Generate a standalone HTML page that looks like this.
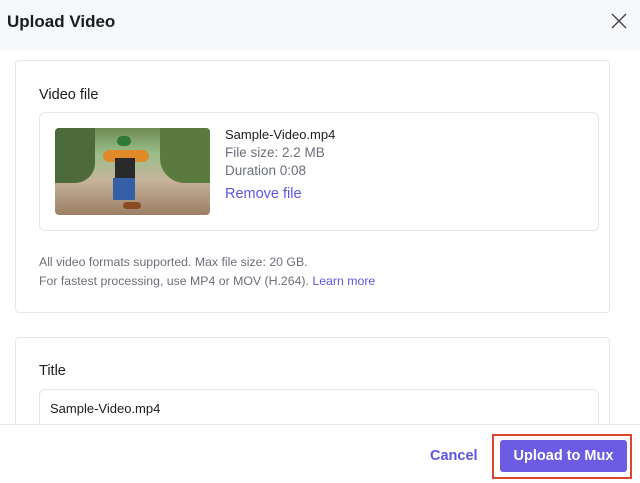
<!DOCTYPE html>
<html style="width:640px;height:483px;overflow:hidden"><head><style>
*{margin:0;padding:0;box-sizing:border-box}
body{width:640px;height:483px;overflow:hidden;background:#fff;font-family:"Liberation Sans",sans-serif;position:relative;color:#1f2023}
.hdr{position:absolute;left:0;top:0;width:640px;height:51px;background:#f7f8fb}
.hdr h1{position:absolute;left:7px;top:12px;font-size:17px;font-weight:bold;color:#1b1c1f}
.card{position:absolute;left:15px;width:595px;border:1px solid #e3e6ee;border-radius:4px;background:#fff}
.lbl{position:absolute;font-size:14.5px;color:#1b1c1f}
.box{position:absolute;left:23px;width:560px;border:1px solid #e3e6ee;border-radius:6px;background:#fff}
.t{position:absolute;font-size:13px;white-space:nowrap}
.g{color:#6b6f79}
.p{color:#5b55e6}
</style></head><body>
<div class="hdr"><h1>Upload Video</h1>
<svg style="position:absolute;left:611px;top:13px" width="16" height="16" viewBox="0 0 16 16"><path d="M1 1L15 15M15 1L1 15" stroke="#444" stroke-width="1.4"/></svg></div>
<div class="card" style="top:60px;height:253px">
<div class="lbl" style="left:23px;top:26px">Video file</div>
<div class="box" style="top:51px;height:119px">
<div style="position:absolute;left:15px;top:15px;width:155px;height:87px;border-radius:4px;background:linear-gradient(180deg,#6f8a55 0%,#9bbf8a 30%,#c6b39a 60%,#9c7f66 100%);overflow:hidden">
<div style="position:absolute;left:0;top:0;width:40px;height:55px;background:#4c6a3a;border-radius:0 0 20px 0"></div>
<div style="position:absolute;right:0;top:0;width:50px;height:55px;background:#5a7a3e;border-radius:0 0 0 25px"></div>
<div style="position:absolute;left:62px;top:8px;width:14px;height:10px;background:#2f7a36;border-radius:6px"></div>
<div style="position:absolute;left:48px;top:22px;width:46px;height:12px;background:#e08a2a;border-radius:6px"></div>
<div style="position:absolute;left:60px;top:30px;width:20px;height:22px;background:#2a2a2a"></div>
<div style="position:absolute;left:58px;top:50px;width:22px;height:22px;background:#3560a8"></div>
<div style="position:absolute;left:68px;top:74px;width:18px;height:7px;background:#8a4a22;border-radius:4px"></div>
</div>
<div class="t" style="left:185px;top:14px;color:#1b1c1f">Sample-Video.mp4</div>
<div class="t g" style="left:185px;top:32px;font-size:13.5px">File size: 2.2 MB</div>
<div class="t g" style="left:185px;top:50px;font-size:13.5px">Duration 0:08</div>
<div class="t p" style="left:185px;top:73px;font-size:14.5px">Remove file</div>
</div>
<div class="t g" style="left:23px;top:194px;font-size:12.3px">All video formats supported. Max file size: 20 GB.</div>
<div class="t g" style="left:23px;top:213px;font-size:12.3px">For fastest processing, use MP4 or MOV (H.264). <span class="p">Learn more</span></div>
</div>
<div class="card" style="top:337px;height:140px">
<div class="lbl" style="left:23px;top:25px">Title</div>
<div class="box" style="top:51px;height:60px"><div class="t" style="left:10px;top:11px;color:#1b1c1f">Sample-Video.mp4</div></div>
</div>
<div style="position:absolute;left:0;top:424px;width:640px;height:59px;background:#fff;border-top:1px solid #e3e6ee">
<div class="t p" style="left:430px;top:23px;font-size:14.5px;font-weight:bold">Cancel</div>
<div style="position:absolute;left:492px;top:9px;width:140px;height:45px;border:2px solid #e0442c"></div>
<div style="position:absolute;left:500px;top:15px;width:127px;height:32px;background:#6b5ce3;border-radius:3px;color:#fff;font-size:14.5px;font-weight:bold;text-align:center;line-height:32px">Upload to Mux</div>
</div>
</body></html>
